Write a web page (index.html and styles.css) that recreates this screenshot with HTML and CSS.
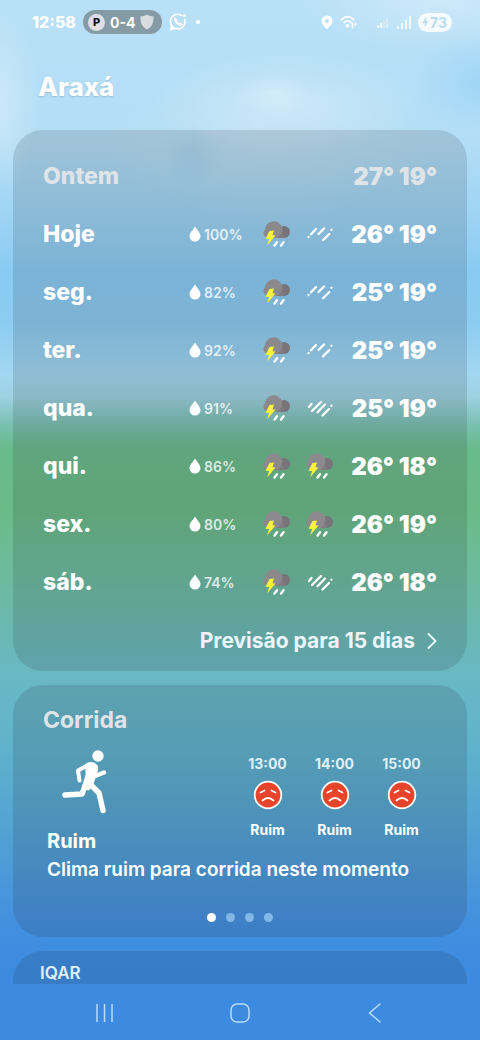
FILE: index.html
```html
<!DOCTYPE html>
<html lang="pt-BR">
<head>
    <meta charset="UTF-8">
    <meta name="viewport" content="width=device-width, initial-scale=1.0">
    <title>Clima - Araxá</title>
    <link rel="stylesheet" href="styles.css">
</head>
<body>
    <!-- shared icons -->
    <svg class="sprite" aria-hidden="true">
        <symbol id="drop" viewBox="0 0 12 16">
            <path d="M6 0.5C7.2 3.2 11.5 6.4 11.5 10.2A5.5 5.3 0 0 1 0.5 10.2C0.5 6.4 4.8 3.2 6 0.5Z" fill="#fff"/>
        </symbol>
        <symbol id="storm" viewBox="0 0 28 28">
            <circle cx="21" cy="12" r="6" fill="#77747a"/>
            <path d="M10 18H5A5 5 0 0 1 2 9.500A8.700 8.700 0 0 1 19 7.500Q20.500 14 16 18Z" fill="#8c898d"/>
            <path d="M14 18Q18.500 15 18.500 11L22 18Z" fill="#7f7c81"/>
            <path d="M6.500 11L11 10.500L9.500 15.300L12.500 15.500L4 25.500L6.200 19L2.500 18.700Z" fill="#f8f53c"/>
            <path d="M14 22.300L11.500 25.500M20.500 22.300L18 25.500" stroke="#fff" stroke-width="2.400" stroke-linecap="round"/>
        </symbol>
        <symbol id="drizzle" viewBox="0 0 28 28">
            <path d="M2.500 17.100L2.600 17M5 14.300L10 9M12.500 14L18 8.500M17 20.300L23.300 14M25.400 9.800L25.500 9.700" stroke="#fff" stroke-width="2.300" stroke-linecap="round"/>
        </symbol>
        <symbol id="rain" viewBox="0 0 28 28">
            <path d="M3 13L5.500 10M6 17L15 8M11.500 18.300L19 10.500M16.500 21.500L23 15M25.400 11.800L25.500 11.700" stroke="#fff" stroke-width="2.300" stroke-linecap="round"/>
        </symbol>
        <symbol id="sad" viewBox="0 0 30 30">
            <circle cx="15" cy="15" r="13.300" fill="#e8432b" stroke="#fff" stroke-width="1.800"/>
            <path d="M7.500 12.500L11.500 10.500M18.500 10.500L22.500 12.500M9.500 20.500Q15 15.500 20.500 20.500" fill="none" stroke="#fff" stroke-width="1.800" stroke-linecap="round"/>
        </symbol>
    </svg>

    <header class="status-bar">
        <div class="status-left">
            <time class="clock">12:58</time>
            <div class="score-pill">
                <span class="team">P</span>
                <span>0-4</span>
                <svg width="14" height="16" viewBox="0 0 14 16"><path d="M7 0.500C9 2 11.500 2.300 13.500 2.300C13.700 9 12 13 7 15.500C2 13 0.300 9 0.500 2.300C2.500 2.300 5 2 7 0.500Z" fill="#d9dcde"/></svg>
            </div>
            <svg width="18" height="18" viewBox="0 0 18 18" fill="none" stroke="#fff" stroke-width="1.600" stroke-linecap="round"><path d="M12.500 2.300A7.300 7.300 0 1 0 15.700 6.500M2.700 12.300L1.500 16.500L5.700 15.400"/><path d="M6 5.300Q5 6.200 6 8.200Q8.500 12 11.500 12.300Q12.800 12 12.700 11L11 9.900L9.900 10.800Q8 9.800 7.300 8.200L8 7.200Z" stroke-width="1.200"/><circle cx="15.300" cy="2.700" r="1.500" fill="#fff" stroke="none"/></svg>
            <span class="more-dot"></span>
        </div>
        <div class="status-right">
            <svg width="12" height="15" viewBox="0 0 12 15"><path fill-rule="evenodd" d="M6 0.500A5.500 5.500 0 0 1 11.500 6C11.500 9.500 8 11.500 6 14.500C4 11.500 0.500 9.500 0.500 6A5.500 5.500 0 0 1 6 0.500ZM6 4A2 2 0 1 0 6 8A2 2 0 1 0 6 4Z" fill="#fff"/></svg>
            <svg class="wifi" width="18" height="14" viewBox="0 0 18 14" fill="none" stroke="#fff" stroke-width="1.800" stroke-linecap="round"><path d="M1.500 4.500Q7.500 -1 13.500 4.500M4 7.500Q7.500 4.500 11 7.500"/><circle cx="7.500" cy="10.800" r="1" fill="#fff"/><path d="M12.500 12.500V8.500M15.500 8.500V10"/></svg>
            <svg width="13" height="12" viewBox="0 0 13 12" stroke="#fff" stroke-width="1.600"><path d="M1 12V9M4 12V7"/><path d="M7 12V5M10 12V2" opacity=".45"/></svg>
            <svg width="14" height="13" viewBox="0 0 14 13" stroke="#fff" stroke-width="1.600"><path d="M1 13V10M5 13V7M9 13V4M13 13V0"/></svg>
            <span class="battery"><svg width="7" height="12" viewBox="0 0 7 12"><path d="M4.500 0.500L0.500 7H3L2.500 11.500L6.500 5H4Z" fill="#b9dcf0"/></svg>73</span>
        </div>
    </header>

    <main class="content">
        <h1 class="city">Araxá</h1>

        <section class="card forecast">
            <table class="days">
                <colgroup>
                    <col>
                    <col class="col-rain">
                    <col class="col-icon">
                    <col class="col-icon">
                    <col class="col-temp">
                </colgroup>
                <tbody>
                    <tr class="past">
                        <th scope="row">Ontem</th>
                        <td></td>
                        <td></td>
                        <td></td>
                        <td class="temps">27° 19°</td>
                    </tr>
                    <tr>
                        <th scope="row">Hoje</th>
                        <td><span class="chance"><svg class="drop"><use href="#drop"/></svg>100%</span></td>
                        <td><svg class="weather"><use href="#storm"/></svg></td>
                        <td><svg class="weather"><use href="#drizzle"/></svg></td>
                        <td class="temps">26° 19°</td>
                    </tr>
                    <tr>
                        <th scope="row">seg.</th>
                        <td><span class="chance"><svg class="drop"><use href="#drop"/></svg>82%</span></td>
                        <td><svg class="weather"><use href="#storm"/></svg></td>
                        <td><svg class="weather"><use href="#drizzle"/></svg></td>
                        <td class="temps">25° 19°</td>
                    </tr>
                    <tr>
                        <th scope="row">ter.</th>
                        <td><span class="chance"><svg class="drop"><use href="#drop"/></svg>92%</span></td>
                        <td><svg class="weather"><use href="#storm"/></svg></td>
                        <td><svg class="weather"><use href="#drizzle"/></svg></td>
                        <td class="temps">25° 19°</td>
                    </tr>
                    <tr>
                        <th scope="row">qua.</th>
                        <td><span class="chance"><svg class="drop"><use href="#drop"/></svg>91%</span></td>
                        <td><svg class="weather"><use href="#storm"/></svg></td>
                        <td><svg class="weather"><use href="#rain"/></svg></td>
                        <td class="temps">25° 19°</td>
                    </tr>
                    <tr>
                        <th scope="row">qui.</th>
                        <td><span class="chance"><svg class="drop"><use href="#drop"/></svg>86%</span></td>
                        <td><svg class="weather"><use href="#storm"/></svg></td>
                        <td><svg class="weather"><use href="#storm"/></svg></td>
                        <td class="temps">26° 18°</td>
                    </tr>
                    <tr>
                        <th scope="row">sex.</th>
                        <td><span class="chance"><svg class="drop"><use href="#drop"/></svg>80%</span></td>
                        <td><svg class="weather"><use href="#storm"/></svg></td>
                        <td><svg class="weather"><use href="#storm"/></svg></td>
                        <td class="temps">26° 19°</td>
                    </tr>
                    <tr>
                        <th scope="row">sáb.</th>
                        <td><span class="chance"><svg class="drop"><use href="#drop"/></svg>74%</span></td>
                        <td><svg class="weather"><use href="#storm"/></svg></td>
                        <td><svg class="weather"><use href="#rain"/></svg></td>
                        <td class="temps">26° 18°</td>
                    </tr>
                </tbody>
            </table>
            <a class="more" href="#">Previsão para 15 dias
                <svg width="10" height="16" viewBox="0 0 10 16" fill="none" stroke="#eaf6fb" stroke-width="1.800" stroke-linecap="round" stroke-linejoin="round"><path d="M1.500 1L8.500 8L1.500 15"/></svg>
            </a>
        </section>

        <section class="card running">
            <h2>Corrida</h2>
            <div class="running-row">
                <div class="running-now">
                    <svg class="runner" width="46" height="64" viewBox="0 0 46 64" fill="none" stroke="#fff" stroke-linecap="round" stroke-linejoin="round">
                        <circle cx="36" cy="6" r="5.700" fill="#fff" stroke="none"/>
                        <path d="M24 14Q28 11.500 32 13Q37 15.500 35.500 20L31 34L27 40L20 38L24 25Z" fill="#fff" stroke-width="1"/>
                        <path d="M27 14.500L16 20.500L17.500 30.500" stroke-width="4"/>
                        <path d="M33 26L42 22.500" stroke-width="4.500"/>
                        <path d="M24 34L20 44L3 45" stroke-width="5.500"/>
                        <path d="M28 34L37 43L41 60.500" stroke-width="5.500"/>
                    </svg>
                    <strong>Ruim</strong>
                </div>
                <ul class="hours">
                    <li><time>13:00</time><svg class="face"><use href="#sad"/></svg><span>Ruim</span></li>
                    <li><time>14:00</time><svg class="face"><use href="#sad"/></svg><span>Ruim</span></li>
                    <li><time>15:00</time><svg class="face"><use href="#sad"/></svg><span>Ruim</span></li>
                </ul>
            </div>
            <p class="summary">Clima ruim para corrida neste momento</p>
            <div class="dots">
                <button class="active" aria-label="1"></button>
                <button aria-label="2"></button>
                <button aria-label="3"></button>
                <button aria-label="4"></button>
            </div>
        </section>

        <section class="card air">
            <h3>IQAR</h3>
        </section>
    </main>

    <nav class="nav-bar">
        <button aria-label="Recentes"><svg width="22" height="22" viewBox="0 0 22 22" fill="none" stroke="#b9dcf7" stroke-width="1.500"><path d="M3 2V20M10.500 2V20M18 2V20"/></svg></button>
        <button aria-label="Início"><svg width="22" height="22" viewBox="0 0 22 22" fill="none" stroke="#b9dcf7" stroke-width="1.500"><rect x="2" y="2" width="18" height="18" rx="6"/></svg></button>
        <button aria-label="Voltar"><svg width="22" height="22" viewBox="0 0 22 22" fill="none" stroke="#b9dcf7" stroke-width="1.500" stroke-linecap="round"><path d="M16 2L5.500 11L16 20"/></svg></button>
    </nav>
</body>
</html>
```
FILE: styles.css
```css
* {
    margin: 0;
    padding: 0;
    box-sizing: border-box;
}
body {
    display: flex;
    flex-direction: column;
    height: 100vh;
    overflow: hidden;
    font-family: Inter, "Liberation Sans", sans-serif;
    color: #fff;
    /* clouds over sky, grass and water */
    background:
        radial-gradient(ellipse 28% 5% at 60% 10%, rgba(255, 255, 255, 0.25), transparent),
        radial-gradient(ellipse 8% 2% at 57% 9%, rgba(255, 255, 255, 0.2), transparent),
        radial-gradient(ellipse 8% 9% at 0% 10%, rgba(255, 255, 255, 0.3), transparent),
        radial-gradient(ellipse 30% 5% at 92% 0%, rgba(255, 255, 255, 0.3), transparent),
        radial-gradient(ellipse 34% 7% at 56% 14%, rgba(255, 245, 235, 0.15), transparent),
        radial-gradient(ellipse 6% 3% at 40% 15%, rgba(110, 180, 225, 0.2), transparent),
        radial-gradient(ellipse 14% 5% at 100% 8%, rgba(130, 200, 245, 0.4), transparent),
        linear-gradient(#b8e0f7 0%, #b4def6 13%, #a0d5f4 20%, #8acbf3 26%, #8cccf3 31%, #a2d7f0 36%, #9fd2e4 38%, #78c0ae 41%, #6abb8c 43%, #6abb86 49%, #6cbba0 56%, #6ab8c4 65%, #5fb2cc 72%, #52a2d4 80%, #4491de 88%, #3d8ce0 92%, #3b8ade 100%);
}
.sprite {
    display: none;
}
svg {
    flex: none;
}
button {
    background: none;
    border: none;
    cursor: pointer;
}

/* status bar */
.status-bar {
    display: flex;
    justify-content: space-between;
    align-items: center;
    height: 44px;
    padding: 0 28px 0 32px;
}
.status-left,
.status-right {
    display: flex;
    align-items: center;
    gap: 7px;
}
.clock {
    font-size: 16px;
    font-weight: 800;
}
.score-pill {
    display: flex;
    align-items: center;
    gap: 5px;
    height: 24px;
    padding: 0 8px 0 5px;
    border-radius: 12px;
    background-color: #859ca6;
    font-size: 14px;
    font-weight: 700;
}
.team {
    width: 17px;
    height: 17px;
    border-radius: 50%;
    background-color: #dfdfe6;
    color: #111;
    font-size: 11px;
    font-weight: 800;
    line-height: 17px;
    text-align: center;
}
.more-dot {
    width: 4px;
    height: 4px;
    margin-left: 2px;
    border-radius: 50%;
    background-color: #fff;
}
.wifi {
    margin-right: 12px;
}
.battery {
    display: flex;
    align-items: center;
    gap: 1px;
    height: 19px;
    padding: 0 5px 0 4px;
    border-radius: 10px;
    background-color: rgba(255, 255, 255, 0.85);
    color: #b9dcf0;
    font-size: 14px;
    font-weight: 700;
}

/* content */
.content {
    display: flex;
    flex: 1;
    flex-direction: column;
    gap: 14px;
    min-height: 0;
    padding: 0 13px;
    overflow: hidden;
}
.city {
    padding: 28px 25px 14px;
    font-size: 26px;
    font-weight: 800;
    line-height: 30px;
    text-shadow: 0 1px 2px rgba(90, 130, 160, 0.35);
}
.card {
    flex: none;
    border-radius: 30px;
    background-color: rgba(35, 35, 40, 0.14);
}
.forecast {
    padding: 17px 30px 0;
}
.days {
    width: 100%;
    border-collapse: collapse;
    table-layout: fixed;
}
.days tr {
    height: 58px;
}
.days th,
.temps {
    font-size: 23px;
    font-weight: 800;
    text-align: left;
    white-space: nowrap;
}
.days .temps {
    font-size: 24px;
    font-weight: 900;
    text-align: right;
}
.past {
    color: #dfe4e8;
}
.col-rain {
    width: 74px;
}
.col-icon {
    width: 43px;
}
.col-temp {
    width: 88px;
}
.chance {
    display: flex;
    align-items: center;
    gap: 3px;
    color: rgba(255, 255, 255, 0.8);
    font-size: 14px;
    font-weight: 600;
}
.drop {
    width: 12px;
    height: 16px;
}
.weather {
    display: block;
    width: 28px;
    height: 28px;
}
.more {
    display: flex;
    justify-content: flex-end;
    align-items: center;
    gap: 12px;
    color: #eaf6fb;
    font-size: 21px;
    font-weight: 700;
    line-height: 60px;
    text-decoration: none;
}

/* running */
.running {
    padding: 20px 30px 15px;
}
.running h2 {
    color: #dfe4e8;
    font-size: 23px;
    font-weight: 700;
    line-height: 30px;
}
.running-row {
    display: flex;
    justify-content: space-between;
    padding: 15px 2px 0 4px;
}
.running-now strong {
    display: block;
    font-size: 20px;
    font-weight: 700;
    line-height: 30px;
}
.runner {
    display: block;
    margin: 0 0 12px 15px;
}
.hours {
    display: flex;
    list-style: none;
}
.hours li {
    display: flex;
    flex-direction: column;
    align-items: center;
    width: 67px;
    padding-top: 4px;
    font-size: 14px;
    font-weight: 700;
    line-height: 20px;
}
.hours time {
    color: #dff0f7;
}
.face {
    width: 30px;
    height: 30px;
    margin: 6px 0 10px;
}
.summary {
    padding-left: 4px;
    font-size: 19px;
    font-weight: 600;
    line-height: 28px;
}
.dots {
    display: flex;
    justify-content: center;
    gap: 10px;
    padding-top: 29px;
}
.dots button {
    width: 9px;
    height: 9px;
    border-radius: 50%;
    background-color: #82b7e8;
}
.dots .active {
    background-color: #fff;
}

/* air quality */
.air {
    padding: 12px 27px 30px;
}
.air h3 {
    color: #dff0fb;
    font-size: 17px;
    font-weight: 600;
    line-height: 20px;
}

/* bottom navigation */
.nav-bar {
    display: flex;
    justify-content: space-around;
    align-items: center;
    height: 56px;
    padding: 2px 38px 0;
    background-color: #3c8be0;
}
.nav-bar button {
    display: flex;
    padding: 6px;
}
```
